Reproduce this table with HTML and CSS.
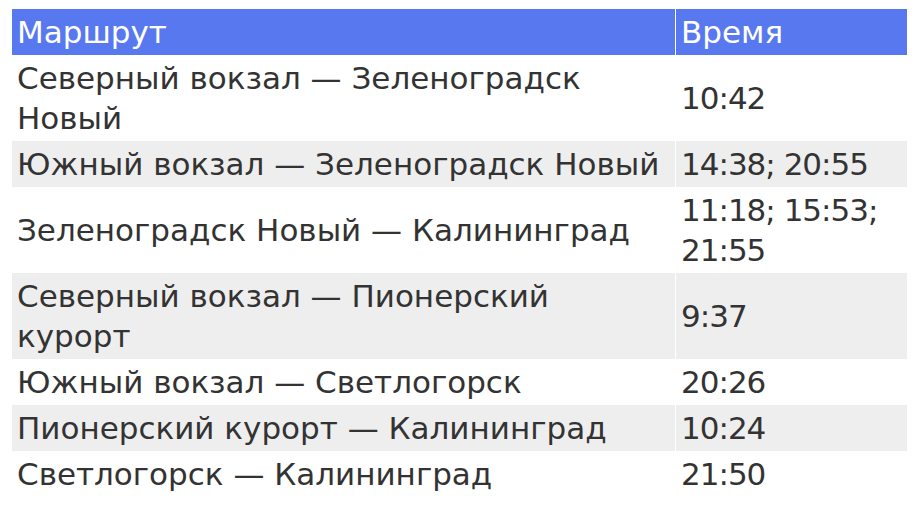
FILE: index.html
```html
<!DOCTYPE html>
<html lang="ru">
<head>
<meta charset="utf-8">
<title>Расписание</title>
<link rel="stylesheet" href="styles.css">
</head>
<body>
<table class="schedule">
  <colgroup><col class="col-route"><col class="col-time"></colgroup>
  <thead>
    <tr><th>Маршрут</th><th>Время</th></tr>
  </thead>
  <tbody>
    <tr><td>Северный вокзал — Зеленоградск Новый</td><td class="time">10:42</td></tr>
    <tr class="alt"><td>Южный вокзал — Зеленоградск Новый</td><td class="time">14:38; 20:55</td></tr>
    <tr><td>Зеленоградск Новый — Калининград</td><td class="time">11:18; 15:53; 21:55</td></tr>
    <tr class="alt"><td>Северный вокзал — Пионерский курорт</td><td class="time">9:37</td></tr>
    <tr><td>Южный вокзал — Светлогорск</td><td class="time">20:26</td></tr>
    <tr class="alt"><td>Пионерский курорт — Калининград</td><td class="time">10:24</td></tr>
    <tr><td>Светлогорск — Калининград</td><td class="time">21:50</td></tr>
  </tbody>
</table>
</body>
</html>
```
FILE: styles.css
```css
html, body {
  margin: 0;
  background: #ffffff;
}
body {
  padding: 9px 17px 0 12px;
  font-family: "DejaVu Sans", "Open Sans", sans-serif;
  color: #333333;
}
.schedule {
  width: 895px;
  border-collapse: separate;
  border-spacing: 0;
  table-layout: fixed;
}
.col-route { width: 664px; }
.col-time { width: 231px; }
.schedule th,
.schedule td {
  padding: 3px 3px 3px 5px;
  font-size: 31px;
  line-height: 40px;
  text-align: left;
  vertical-align: middle;
  font-weight: normal;
}
.schedule th:first-child,
.schedule td:first-child {
  border-right: 1px solid #ffffff;
}
.schedule th {
  background: #5878f0;
  color: #ffffff;
}
.schedule td.time {
  letter-spacing: -1px;
}
.schedule tr.alt td {
  background: #eeeeee;
}
```
